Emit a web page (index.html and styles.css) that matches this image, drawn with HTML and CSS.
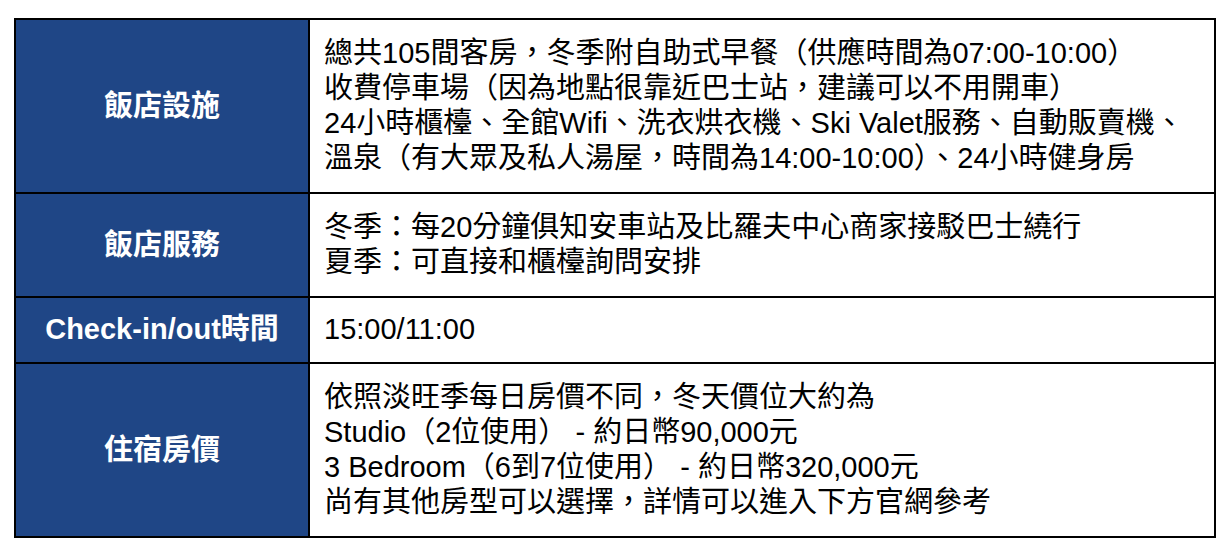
FILE: index.html
```html
<!DOCTYPE html>
<html lang="zh-Hant">
<head>
<meta charset="utf-8">
<title>飯店資訊</title>
<link rel="stylesheet" href="styles.css">
</head>
<body>
<table class="info">
  <colgroup>
    <col class="col-head">
    <col class="col-body">
  </colgroup>
  <tbody>
    <tr>
      <th class="label">飯店設施</th>
      <td class="content">
        <div class="line">總共105間客房，冬季附自助式早餐（供應時間為07:00-10:00）</div>
        <div class="line">收費停車場（因為地點很靠近巴士站，建議可以不用開車）</div>
        <div class="line">24小時櫃檯、全館Wifi、洗衣烘衣機、Ski Valet服務、自動販賣機、</div>
        <div class="line">溫泉（有大眾及私人湯屋，時間為14:00-10:00）、24小時健身房</div>
      </td>
    </tr>
    <tr>
      <th class="label">飯店服務</th>
      <td class="content">
        <div class="line">冬季：每20分鐘俱知安車站及比羅夫中心商家接駁巴士繞行</div>
        <div class="line">夏季：可直接和櫃檯詢問安排</div>
      </td>
    </tr>
    <tr class="short">
      <th class="label">Check-in/out時間</th>
      <td class="content">
        <div class="line">15:00/11:00</div>
      </td>
    </tr>
    <tr>
      <th class="label">住宿房價</th>
      <td class="content">
        <div class="line">依照淡旺季每日房價不同，冬天價位大約為</div>
        <div class="line">Studio（2位使用） - 約日幣90,000元</div>
        <div class="line">3 Bedroom（6到7位使用） - 約日幣320,000元</div>
        <div class="line">尚有其他房型可以選擇，詳情可以進入下方官網參考</div>
      </td>
    </tr>
  </tbody>
</table>
</body>
</html>
```

FILE: styles.css
```css
html, body {
  margin: 0;
  padding: 0;
  background: #ffffff;
}

body {
  padding: 18px 0 0 14px;
  font-family: "Liberation Sans", "Noto Sans CJK TC", sans-serif;
  color: #000000;
}

.info {
  border-collapse: collapse;
  width: 1202px;
  table-layout: fixed;
}

.col-head {
  width: 294px;
}

.info th,
.info td {
  border: 2px solid #000000;
  font-size: 29px;
  line-height: 35px;
  padding: 16px 14px;
  vertical-align: middle;
}

.label {
  background: #1f4686;
  color: #ffffff;
  font-weight: bold;
  text-align: center;
  white-space: nowrap;
}

.content {
  text-align: left;
  font-weight: normal;
}

.line {
  white-space: nowrap;
}

.short th,
.short td {
  padding-top: 14px;
  padding-bottom: 15px;
}
```
